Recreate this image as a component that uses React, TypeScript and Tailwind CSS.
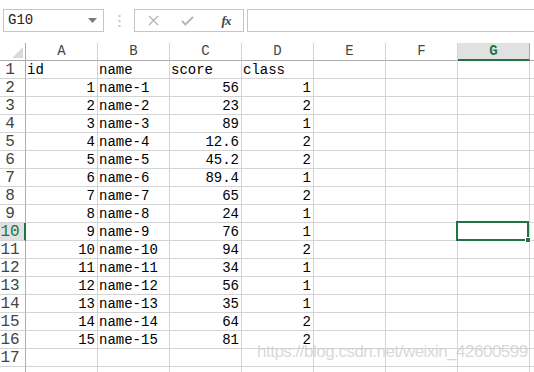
import React from 'react';

const cols = ['A', 'B', 'C', 'D', 'E', 'F', 'G'];

type Row = [string, string, string, string];

const data: Row[] = [
  ['id', 'name', 'score', 'class'],
  ['1', 'name-1', '56', '1'],
  ['2', 'name-2', '23', '2'],
  ['3', 'name-3', '89', '1'],
  ['4', 'name-4', '12.6', '2'],
  ['5', 'name-5', '45.2', '2'],
  ['6', 'name-6', '89.4', '1'],
  ['7', 'name-7', '65', '2'],
  ['8', 'name-8', '24', '1'],
  ['9', 'name-9', '76', '1'],
  ['10', 'name-10', '94', '2'],
  ['11', 'name-11', '34', '1'],
  ['12', 'name-12', '56', '1'],
  ['13', 'name-13', '35', '1'],
  ['14', 'name-14', '64', '2'],
  ['15', 'name-15', '81', '2'],
];

const isNum = (v: string) => v !== '' && !isNaN(Number(v));

function Toolbar() {
  return (
    <div className="h-[43px] flex items-start pt-[9px] pl-[3px]">
      <div className="w-[101px] h-[23px] border border-[#c6c6c6] flex items-center justify-between pl-[4px] pr-[6px]">
        <span className="text-[14px] text-[#222]">G10</span>
        <svg width="9" height="5" viewBox="0 0 9 5">
          <path d="M0 0 L9 0 L4.5 5 Z" fill="#7a7a7a" />
        </svg>
      </div>
      <div className="w-[30px] h-[23px] flex items-center justify-center">
        <svg width="3" height="12" viewBox="0 0 3 12">
          <rect x="0.5" y="0" width="2" height="2" fill="#c8c8c8" />
          <rect x="0.5" y="5" width="2" height="2" fill="#c8c8c8" />
          <rect x="0.5" y="10" width="2" height="2" fill="#c8c8c8" />
        </svg>
      </div>
      <div className="w-[110px] h-[23px] border border-[#c6c6c6] flex items-center">
        <div className="w-[36px] flex justify-center">
          <svg width="11" height="11" viewBox="0 0 11 11">
            <path d="M1 1 L10 10 M10 1 L1 10" stroke="#b4b4b4" strokeWidth="1.3" />
          </svg>
        </div>
        <div className="w-[32px] flex justify-center">
          <svg width="13" height="10" viewBox="0 0 13 10">
            <path d="M1 5 L4.5 8.5 L12 1" stroke="#b4b4b4" strokeWidth="1.8" fill="none" />
          </svg>
        </div>
        <div className="flex-1 flex justify-center pl-[6px]">
          <span className="text-[13px] italic text-[#444] font-bold [font-family:'Liberation_Serif',serif] tracking-[-1px]">fx</span>
        </div>
      </div>
      <div className="ml-[3px] flex-1 h-[23px] border border-r-0 border-[#c6c6c6]" />
    </div>
  );
}

function HeaderRow() {
  return (
    <div className="flex h-[18px]">
      <div className="w-[26px] shrink-0 border-r border-b border-[#ababab] relative">
        <svg className="absolute right-[2px] bottom-[2px]" width="11" height="11" viewBox="0 0 11 11">
          <path d="M11 0 L11 11 L0 11 Z" fill="#dadada" />
        </svg>
      </div>
      {cols.map(c => {
        const sel = c === 'G';
        return (
          <div
            key={c}
            className={
              sel
                ? 'w-[72px] shrink-0 bg-[#e1e1e1] border-r border-[#ababab] border-b-2 border-b-[#217346] text-[#217346] font-bold text-center text-[14px] leading-[17px]'
                : 'w-[72px] shrink-0 border-r border-[#d4d4d4] border-b border-b-[#ababab] text-[#444] text-center text-[14px] leading-[17px]'
            }
          >
            {c}
          </div>
        );
      })}
      <div className="flex-1 border-b border-[#ababab]" />
    </div>
  );
}

function DataRow({ n, row, label = true }: { n: number; row?: Row; label?: boolean }) {
  const sel = n === 10;
  return (
    <div className="flex h-[18px]">
      <div
        className={
          sel
            ? 'w-[26px] shrink-0 bg-[#e1e1e1] border-r-2 border-[#217346] border-b border-b-[#d4d4d4] text-[#217346] text-[16px] leading-[18px] text-center pr-[4px]'
            : 'w-[26px] shrink-0 border-r border-[#ababab] border-b border-b-[#d4d4d4] text-[#444] text-[16px] leading-[18px] text-center pr-[5px]'
        }
      >
        {label ? n : ''}
      </div>
      {cols.map((c, i) => {
        const v = row && i < 4 ? row[i] : '';
        return (
          <div
            key={c}
            className={
              'w-[72px] shrink-0 border-r border-b border-[#d4d4d4] text-[14px] leading-[18px] text-black whitespace-nowrap relative ' +
              (isNum(v) ? 'text-right pr-[2px]' : 'text-left pl-[1px]')
            }
          >
            {v}
            {sel && c === 'G' && (
              <div className="absolute -left-[2px] -top-[2px] w-[73px] h-[20px] border-2 border-[#217346] z-10">
                <div className="absolute -right-[4px] -bottom-[4px] w-[6px] h-[6px] bg-[#217346] border border-white" />
              </div>
            )}
          </div>
        );
      })}
      <div className="flex-1 border-b border-[#d4d4d4]" />
    </div>
  );
}

export default function App() {
  return (
    <div className="w-[534px] h-[372px] overflow-hidden bg-white relative [font-family:'Liberation_Mono',monospace]">
      <Toolbar />
      <HeaderRow />
      {Array.from({ length: 17 }, (_, i) => (
        <DataRow key={i} n={i + 1} row={data[i]} />
      ))}
      <DataRow n={18} label={false} />
      <div className="absolute left-[257px] top-[340px] text-[17px] leading-[24px] text-[#c8c8c8]/70 [font-family:'Liberation_Sans',sans-serif] tracking-[-0.5px] pointer-events-none z-20 whitespace-nowrap">
        https://blog.csdn.net/weixin_42600599
      </div>
    </div>
  );
}
